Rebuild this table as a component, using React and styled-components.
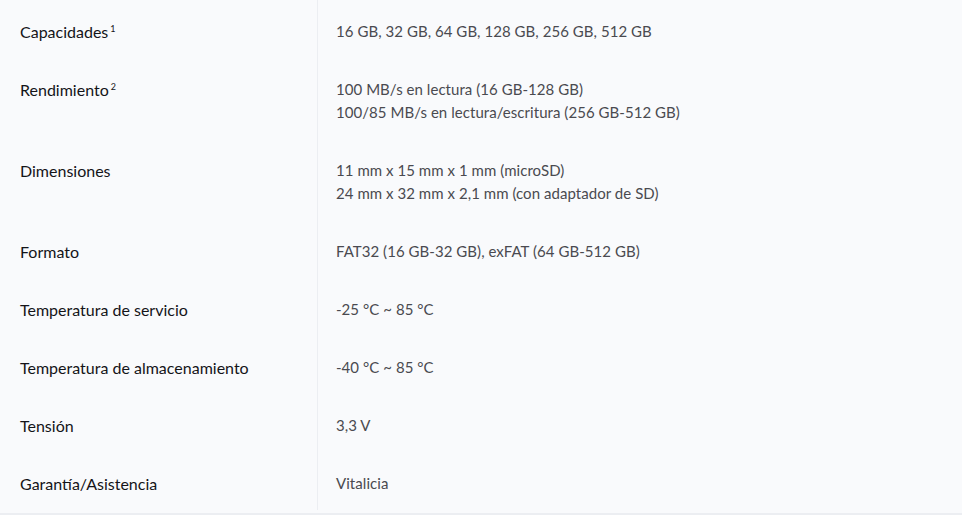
import React from 'react';
import styled, { createGlobalStyle } from "styled-components";

const specs = [
  { label: "Capacidades", sup: "1", values: ["16 GB, 32 GB, 64 GB, 128 GB, 256 GB, 512 GB"] },
  {
    label: "Rendimiento",
    sup: "2",
    values: [
      "100 MB/s en lectura (16 GB-128 GB)",
      "100/85 MB/s en lectura/escritura (256 GB-512 GB)"
    ]
  },
  {
    label: "Dimensiones",
    values: [
      "11 mm x 15 mm x 1 mm (microSD)",
      "24 mm x 32 mm x 2,1 mm (con adaptador de SD)"
    ]
  },
  { label: "Formato", values: ["FAT32 (16 GB-32 GB), exFAT (64 GB-512 GB)"] },
  { label: "Temperatura de servicio", values: ["-25 °C ~ 85 °C"] },
  { label: "Temperatura de almacenamiento", values: ["-40 °C ~ 85 °C"] },
  { label: "Tensión", values: ["3,3 V"] },
  { label: "Garantía/Asistencia", values: ["Vitalicia"] }
];

const GlobalStyle = createGlobalStyle`
  body {
    margin: 0;
    background: #ffffff;
    font-family: "Lato", "Open Sans", sans-serif;
  }
`;

const Table = styled.div`
  width: 962px;
  background: #f9fafc;
  border-bottom: 2px solid #eceef2;
  padding-bottom: 3px;
  display: grid;
  grid-template-columns: 318px 1fr;
`;

const Label = styled.div`
  padding: 20px 20px 15px 20px;
  border-right: 1px solid #eceef2;
  font-size: 16px;
  line-height: 23px;
  color: #141418;
`;

const Sup = styled.sup`
  font-size: 9px;
  margin-left: 2px;
  vertical-align: 6px;
  line-height: 0;
`;

const Value = styled.div`
  padding: 20px 18px 15px 18px;
  font-size: 15px;
  letter-spacing: 0.05px;
  line-height: 23px;
  color: #4a4a50;
`;

const Line = styled.div``;

const App = () => (
  <>
    <GlobalStyle />
    <Table>
      {specs.map(spec => (
        <React.Fragment key={spec.label}>
          <Label>
            {spec.label}
            {spec.sup && <Sup>{spec.sup}</Sup>}
          </Label>
          <Value>
            {spec.values.map(v => (
              <Line key={v}>{v}</Line>
            ))}
          </Value>
        </React.Fragment>
      ))}
    </Table>
  </>
);

export default App;
